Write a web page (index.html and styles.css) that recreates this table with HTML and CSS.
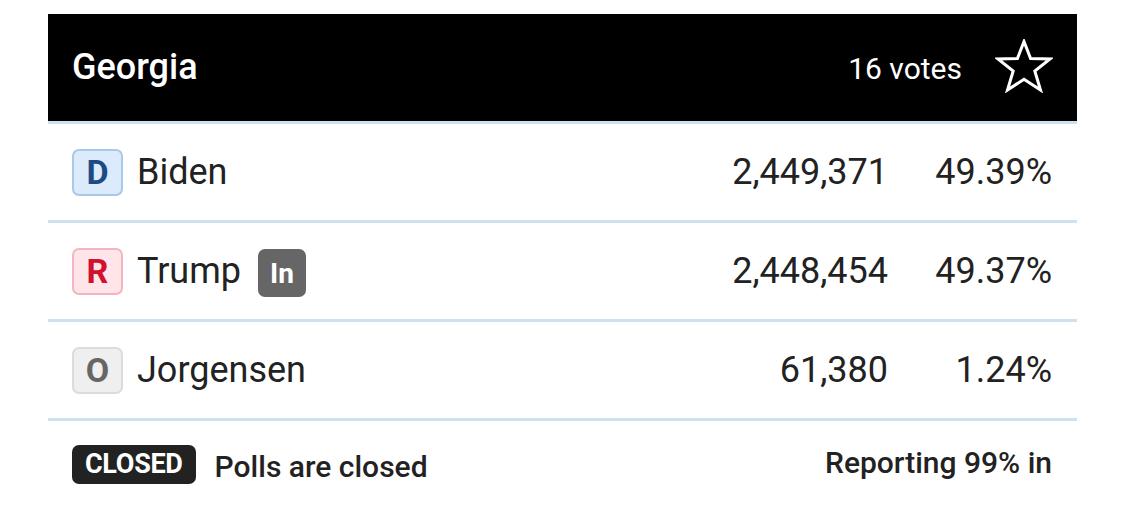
FILE: index.html
```html
<!DOCTYPE html>
<html lang="en">
<head>
<meta charset="utf-8">
<title>Georgia results</title>
<link rel="stylesheet" href="styles.css">
</head>
<body>
<div class="card">
  <div class="header">
    <div class="state">Georgia</div>
    <div class="header-right">
      <span class="votes">16 votes</span>
      <svg class="star" width="58" height="54" viewBox="0 0 58 54" aria-hidden="true">
        <polygon points="29,2.5 35.6,19.5 55,20 39.8,32 45.5,51 29,40.2 12.5,51 18.2,32 3,20 22.4,19.5" fill="none" stroke="#fff" stroke-width="3" stroke-linejoin="miter"/>
      </svg>
    </div>
  </div>
  <div class="row">
    <span class="party party-d">D</span>
    <span class="name">Biden</span>
    <span class="count">2,449,371</span>
    <span class="pct">49.39%</span>
  </div>
  <div class="row">
    <span class="party party-r">R</span>
    <span class="name">Trump</span>
    <span class="incumbent">In</span>
    <span class="count">2,448,454</span>
    <span class="pct">49.37%</span>
  </div>
  <div class="row">
    <span class="party party-o">O</span>
    <span class="name">Jorgensen</span>
    <span class="count">61,380</span>
    <span class="pct">1.24%</span>
  </div>
  <div class="footer">
    <span class="closed">CLOSED</span>
    <span class="polls">Polls are closed</span>
    <span class="reporting">Reporting 99% in</span>
  </div>
</div>
</body>
</html>
```

FILE: styles.css
```css
* { box-sizing: border-box; }
html, body {
  margin: 0;
  padding: 0;
  background: #fff;
  font-family: Roboto, "Liberation Sans", Arial, sans-serif;
  color: #222;
}
.card {
  margin: 14px 0 0 48px;
  width: 1029px;
}
.header {
  height: 110px;
  background: #000;
  border-bottom: 3px solid #cfe0ef;
  display: flex;
  align-items: center;
  padding: 0 24px 0 24px;
}
.state {
  color: #fff;
  font-size: 36px;
  font-weight: 500;
  flex: 1;
  margin-top: -2px;
}
.header-right {
  display: flex;
  align-items: center;
  gap: 33px;
}
.votes {
  color: #fff;
  font-size: 30px;
  font-weight: 400;
  margin-top: 2px;
}
.star { display: block; margin-top: -4px; }
.row {
  height: 99px;
  border-bottom: 3px solid #cfe0ef;
  display: flex;
  align-items: center;
  padding: 0 25px 0 24px;
  font-size: 36px;
}
.party {
  width: 51px;
  height: 47px;
  border: 2px solid;
  border-radius: 7px;
  display: flex;
  align-items: center;
  justify-content: center;
  font-size: 34px;
  font-weight: 700;
  margin-right: 14px;
}
.party-d { background: #dcebfb; border-color: #a9c8e8; color: #1b4b82; }
.party-r { background: #fde5ea; border-color: #f7b3bf; color: #d0122c; }
.party-o { background: #efefef; border-color: #dcdcdc; color: #666; }
.name { font-size: 36px; color: #222; }
.incumbent {
  margin-left: 17px;
  background: #666;
  color: #fff;
  border-radius: 7px;
  width: 48px;
  height: 48px;
  display: flex;
  align-items: center;
  justify-content: center;
  font-size: 28px;
  font-weight: 700;
  margin-top: 4px;
}
.count {
  margin-left: auto;
  text-align: right;
  margin-right: -2px;
}
.pct {
  width: 166px;
  text-align: right;
}
.footer {
  display: flex;
  align-items: center;
  padding: 23px 25px 0 24px;
}
.closed {
  background: #222;
  color: #fff;
  font-size: 27px;
  font-weight: 700;
  height: 39px;
  padding: 0 13px;
  border-radius: 7px;
  display: flex;
  align-items: center;
  letter-spacing: -0.3px;
}
.polls {
  margin-left: 19px;
  font-size: 30px;
  font-weight: 500;
  margin-top: 5px;
}
.reporting {
  margin-left: auto;
  font-size: 30px;
  font-weight: 500;
  margin-top: -4px;
}
```
